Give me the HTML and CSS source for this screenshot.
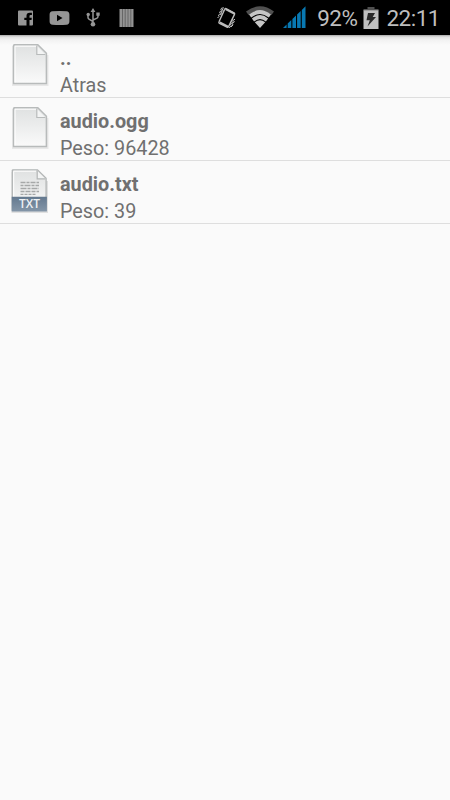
FILE: index.html
```html
<!DOCTYPE html>
<html lang="es">
<head>
    <meta charset="UTF-8">
    <meta name="viewport" content="width=device-width, initial-scale=1.0">
    <title>Archivos</title>
    <link rel="stylesheet" href="styles.css">
</head>
<body>
    <header class="status-bar">
        <div class="notifications">
            <svg width="15" height="16" viewBox="0 0 15 16">
                <path fill="#969696" d="M1 .5h13q1 0 1 1v13q0 1-1 1h-2.500V10h2l.3-2.300h-2.300V6q0-1 1-1h1.400V2.700H11.500Q8.500 2.700 8.500 5.800v1.900H6.300V10h2.200v5.500H1q-1 0-1-1v-13q0-1 1-1z"/>
            </svg>
            <svg width="21" height="14" viewBox="0 0 21 14">
                <path fill="#969696" fill-rule="evenodd" d="M3.500.3Q10.500-.3 17.500.3q2.900.2 2.900 3.200v7q0 2.900-2.900 3.200-7 .6-14 0Q.6 13.400.6 10.500v-7Q.6.600 3.500.3zM8 3.800v6.400L13.500 7z"/>
            </svg>
            <svg width="14" height="19" viewBox="0 0 14 19">
                <path fill="none" stroke="#969696" stroke-width="1.500" d="M7 3v13M2 7v2.500q0 1 1 1.700l4 2.300M12 6v2.500q0 1-1 1.700L7 12"/>
                <path fill="#969696" d="M7 0l2.400 4H4.600zM10.300 4.500h3.400v3.300h-3.400z"/>
                <circle cx="2.200" cy="6.500" r="1.700" fill="#969696"/>
                <circle cx="7" cy="16.300" r="2.300" fill="#969696"/>
            </svg>
            <svg class="bars" width="15" height="18" viewBox="0 0 15 18">
                <path fill="#939393" d="M.5 0h14v18H.5z"/>
                <path stroke="#5a5a5a" stroke-width=".8" d="M3.500 0v18M6.200 0v18M9 0v18M11.800 0v18"/>
            </svg>
        </div>
        <div class="system">
            <svg class="vibrate" width="22" height="25" viewBox="0 0 22 25">
                <g fill="none" stroke="#bdbdbd">
                    <path stroke-width="1.400" d="M10 2.600l8 4.200q1 .6.500 1.600l-6 12.300q-.5 1-1.500.5L3.500 17.300q-1-.6-.5-1.600L8.700 3.300q.4-1.200 1.300-.7z"/>
                    <path stroke-width="2" d="M9.600 3.200l8.600 4.500M3.800 16.300l8.200 4.400"/>
                    <path stroke-width="1" d="M6.500 1.500L4.700 3l1 1.500L3.500 6l1 1.500L2.500 9l.5 1.500L1.500 12M8 1.500L6.200 3l1 1.500L5 6l1 1.500L4 9M19 13l-1.500 1.500.8 1.500-2 1.500.7 1.500-2 2M17.200 13l-1.500 2 .8 1.500-2 1.500.7 1.500-2 2.500"/>
                </g>
            </svg>
            <svg class="wifi" width="28" height="22" viewBox="0 0 28 22">
                <path fill="#505050" d="M0 5.500Q14-5 28 5.500l-2.500 3.400Q14 0 2.500 8.900z"/>
                <path fill="#c6c6c6" d="M3 8.600Q14-.5 25 8.600l-2.200 3Q14 4.200 5.200 11.600zM5.900 12.500Q14 5.600 22.100 12.500l-2.200 3Q14 10.500 8.100 15.500zM8.800 16.300Q14 12 19.200 16.300L14 22z"/>
            </svg>
            <svg class="signal" width="23" height="22" viewBox="0 0 23 22">
                <path fill="#0878b2" d="M0 22l3.600-3.500V22zM4.700 22v-4.500L8.300 14v8zM9.400 22v-9l3.600-3.500V22zM14.100 22V8.500L17.700 5v17zM18.800 22V4L22.500.3V22z"/>
            </svg>
            <span class="battery-level">92%</span>
            <svg class="battery" width="16" height="22" viewBox="0 0 16 22">
                <path fill="#505050" d="M4.500 0h7v2h4v2H.5V2h4z"/>
                <path fill="#c0c0c0" d="M.5 3.300h15V22H.5z"/>
                <path fill="#2a2a2a" d="M5 6h7L9.700 10H13l-8.500 9.500 2.300-6.300H3.500z"/>
            </svg>
            <span class="clock">22:11</span>
        </div>
    </header>

    <svg class="defs" width="0" height="0">
        <defs>
            <linearGradient id="paper" x1="0" y1="0" x2="0" y2="1">
                <stop offset="0" stop-color="#dfe1e1"/>
                <stop offset="1" stop-color="#fafafa"/>
            </linearGradient>
            <linearGradient id="band" x1="0" y1="0" x2="0" y2="1">
                <stop offset="0" stop-color="#64798f"/>
                <stop offset="1" stop-color="#8496a8"/>
            </linearGradient>
            <symbol id="file" viewBox="0 0 40 46">
                <path fill="none" stroke="#000" stroke-opacity=".07" stroke-width="3" d="M3.500 4v38.500H37V13"/>
                <path fill="url(#paper)" stroke="#b8bbbb" stroke-width="1.500" d="M4.300 2.800h23.500l8.600 8.400V41.500H3.600V3.500q0-.7.700-.7z"/>
                <path fill="none" stroke="#fff" d="M5 40.400V4.200h21.300"/>
                <path fill="#f3f4f4" stroke="#b8bbbb" stroke-width="1.200" d="M26.800 3.800v8.700h8.500"/>
            </symbol>
        </defs>
    </svg>

    <ul class="file-list">
        <li class="file">
            <svg class="file-icon" width="40" height="46"><use href="#file"/></svg>
            <div class="file-text">
                <div class="name">..</div>
                <div class="detail">Atras</div>
            </div>
        </li>
        <li class="file">
            <svg class="file-icon" width="40" height="46"><use href="#file"/></svg>
            <div class="file-text">
                <div class="name">audio.ogg</div>
                <div class="detail">Peso: 96428</div>
            </div>
        </li>
        <li class="file">
            <svg class="file-icon" width="40" height="46" viewBox="0 0 40 46">
                <path fill="none" stroke="#000" stroke-opacity=".1" stroke-width="3" d="M3 4v39.500h33.500V13"/>
                <path fill="url(#paper)" stroke="#b3b6b6" stroke-width="1.300" d="M3 1.800h24.500l8.600 8.400V42H2.300V2.500q0-.7.700-.7z"/>
                <path fill="none" stroke="#fff" d="M3.700 30V3.200H26"/>
                <path fill="#f3f4f4" stroke="#b3b6b6" stroke-width="1.200" d="M27.200 2.800v8h8"/>
                <g stroke="#a6a8a8" stroke-width="1.300">
                    <path stroke-dasharray="5 1 3 1" d="M10.500 14.500H29"/>
                    <path stroke-dasharray="3 1 6 1" d="M10.500 17.500H29"/>
                    <path stroke-dasharray="6 1 3 1" d="M10.500 20.500H29"/>
                    <path stroke-dasharray="4 1 5 1" d="M10.500 23.500H29"/>
                    <path stroke-dasharray="3 1" d="M10.500 26.300H26"/>
                </g>
                <path fill="url(#band)" d="M1.700 28.800h35.200v14.700H1.700z"/>
                <text class="band-label" x="9" y="40.300" textLength="21" lengthAdjust="spacingAndGlyphs">TXT</text>
            </svg>
            <div class="file-text">
                <div class="name">audio.txt</div>
                <div class="detail">Peso: 39</div>
            </div>
        </li>
    </ul>
</body>
</html>
```

FILE: styles.css
```css
body {
    margin: 0;
    min-height: 800px;
    background: #fafafa;
    color: #707070;
    font-family: Roboto, sans-serif;
}
.status-bar {
    display: flex;
    justify-content: space-between;
    box-sizing: border-box;
    height: 35px;
    padding: 0 10px 0 18px;
    background: #000;
    color: #bebebe;
    font-size: 22.5px;
    letter-spacing: -0.5px;
}
.notifications {
    display: flex;
    align-items: center;
    gap: 16px;
}
.bars {
    margin-left: 3px;
}
.system {
    display: flex;
    align-items: center;
    height: 36px;
}
.vibrate {
    margin-top: 0;
}
.wifi {
    margin-left: 8px;
    margin-top: -3px;
}
.signal {
    margin: -3px 11px 0 9px;
}
.battery {
    margin: -1px 7px 0 6px;
}
.defs {
    position: absolute;
}
.file-list {
    margin: 0;
    padding: 0;
    list-style: none;
    background: linear-gradient(#a8a8a8, #e2e2e2 2px, #f2f2f2 5px, #fafafa 10px);
}
.file {
    display: flex;
    box-sizing: border-box;
    height: 63px;
    padding: 7px 10px 0;
    border-bottom: 1px solid #dedede;
}
.file-text {
    margin-left: 10px;
    padding-top: 3px;
    font-size: 19.8px;
    line-height: 27px;
}
.name {
    font-weight: bold;
}
.band-label {
    fill: #eef1f4;
    font-family: "Open Sans", sans-serif;
    font-size: 13px;
    font-weight: 600;
}
```
